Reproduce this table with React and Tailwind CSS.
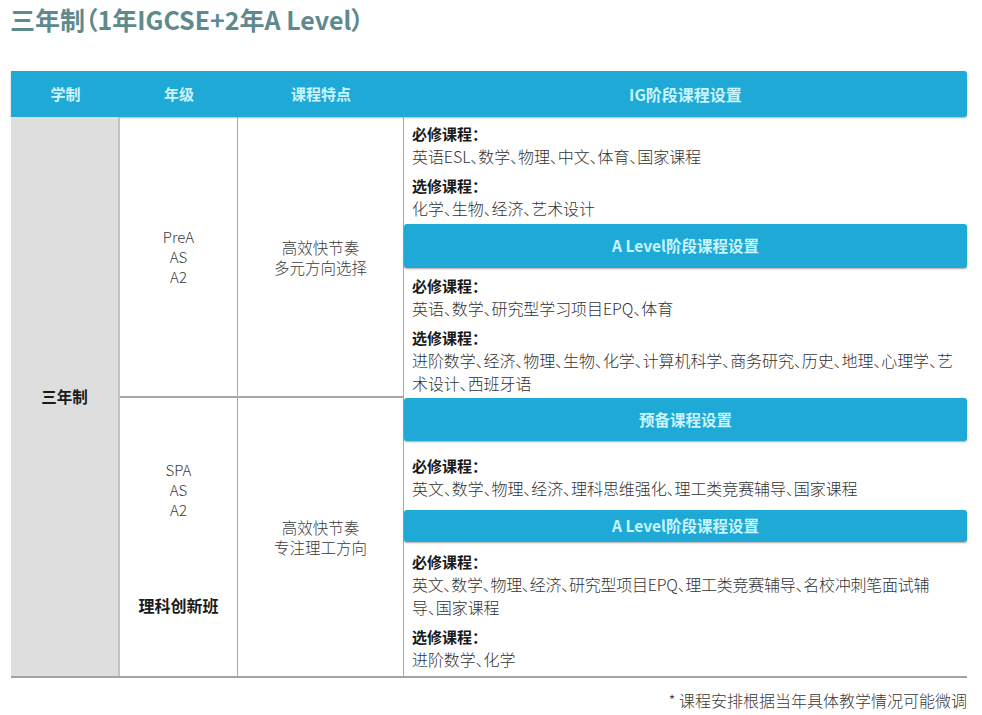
import React from "react";

const Bar = ({ children, h }) => (
  <div
    className={`${h} bg-[#1fa9d6] rounded-[3px] shadow-[0_1px_2px_rgba(0,0,0,0.35)] flex items-center justify-center text-[15.5px] font-bold text-[#c9f5ff]`}
  >
    {children}
  </div>
);

const Label = ({ children }) => (
  <div className="h-[23px] leading-[23px] text-[15px] font-bold text-[#1a1a1a] whitespace-nowrap [font-feature-settings:'palt']">{children}</div>
);

const Line = ({ children, tight }) => (
  <div
    className={`h-[23px] leading-[23px] text-[16px] font-light text-[#333333] whitespace-nowrap [font-feature-settings:'palt'] ${tight ? "tracking-[-0.25px]" : "tracking-[-0.08px]"}`}
  >
    {children}
  </div>
);

export default function App() {
  return (
    <div className="w-[982px] h-[715px] bg-white font-[Noto_Sans_CJK_SC,sans-serif] overflow-hidden">
      <h1 className="pl-[10px] pt-[3px] h-[35px] text-[25px] leading-[32px] font-bold text-[#5e8a8e] whitespace-nowrap [font-feature-settings:'palt']">
        三年制（1年IGCSE+2年A Level）
      </h1>
      <div className="ml-[11px] mt-[36px] w-[956px]">
        {/* header */}
        <div className="grid grid-cols-[109px_118px_166px_563px] h-[46px] bg-[#1fa9d6] rounded-r-[3px] shadow-[0_1px_2px_rgba(0,0,0,0.3)] text-[15px] font-bold text-[#c9f5ff]">
          <div className="flex items-center justify-center">学制</div>
          <div className="flex items-center justify-center">年级</div>
          <div className="flex items-center justify-center">课程特点</div>
          <div className="flex items-center justify-center text-[16px]">IG阶段课程设置</div>
        </div>
        {/* body */}
        <div className="grid grid-cols-[109px_118px_166px_563px] border-b-2 border-[#a3a3a3]">
          <div className="row-span-2 bg-[#dedede] border-r-2 border-[#c2c2c2] flex items-center justify-center text-[15.5px] font-bold text-[#1a1a1a]">
            三年制
          </div>
          {/* row 1 */}
          <div className="border-r border-b-2 border-[#a8a8a8] flex flex-col items-center justify-center text-[15px] leading-[20px] font-light text-[#3a3a3a]">
            <div>PreA</div>
            <div>AS</div>
            <div>A2</div>
          </div>
          <div className="border-r border-b-2 border-[#a8a8a8] flex flex-col items-center justify-center text-[15.5px] leading-[20px] font-light text-[#3a3a3a]">
            <div>高效快节奏</div>
            <div>多元方向选择</div>
          </div>
          <div className="flex flex-col">
            <div className="pl-[8px] pt-[5px] pb-[4px]">
              <Label>必修课程：</Label>
              <Line>英语ESL、数学、物理、中文、体育、国家课程</Line>
              <div className="h-[6px]" />
              <Label>选修课程：</Label>
              <Line>化学、生物、经济、艺术设计</Line>
            </div>
            <Bar h="h-[44px]">A Level阶段课程设置</Bar>
            <div className="pl-[8px] pt-[6px] pb-[3px]">
              <Label>必修课程：</Label>
              <Line>英语、数学、研究型学习项目EPQ、体育</Line>
              <div className="h-[6px]" />
              <Label>选修课程：</Label>
              <Line>进阶数学、经济、物理、生物、化学、计算机科学、商务研究、历史、地理、心理学、艺</Line>
              <Line>术设计、西班牙语</Line>
            </div>
          </div>
          {/* row 2 */}
          <div className="border-r border-[#a8a8a8] flex flex-col items-center justify-center text-[15px] leading-[20px] font-light text-[#3a3a3a]">
            <div>SPA</div>
            <div>AS</div>
            <div>A2</div>
            <div className="mt-[75px] text-[16px] font-bold text-[#1a1a1a]">理科创新班</div>
          </div>
          <div className="border-r border-[#a8a8a8] flex flex-col items-center justify-center text-[15.5px] leading-[20px] font-light text-[#3a3a3a]">
            <div>高效快节奏</div>
            <div>专注理工方向</div>
          </div>
          <div className="flex flex-col">
            <Bar h="h-[43px]">预备课程设置</Bar>
            <div className="pl-[8px] pt-[13px] pb-[10px]">
              <Label>必修课程：</Label>
              <Line>英文、数学、物理、经济、理科思维强化、理工类竞赛辅导、国家课程</Line>
            </div>
            <Bar h="h-[32px]">A Level阶段课程设置</Bar>
            <div className="pl-[8px] pt-[8px] pb-[5px]">
              <Label>必修课程：</Label>
              <Line tight>英文、数学、物理、经济、研究型项目EPQ、理工类竞赛辅导、名校冲刺笔面试辅</Line>
              <Line>导、国家课程</Line>
              <div className="h-[6px]" />
              <Label>选修课程：</Label>
              <Line>进阶数学、化学</Line>
            </div>
          </div>
        </div>
        <div className="mt-[10px] text-right text-[16px] leading-[24px] font-light text-[#3a3a3a] whitespace-nowrap">
          * 课程安排根据当年具体教学情况可能微调
        </div>
      </div>
    </div>
  );
}
